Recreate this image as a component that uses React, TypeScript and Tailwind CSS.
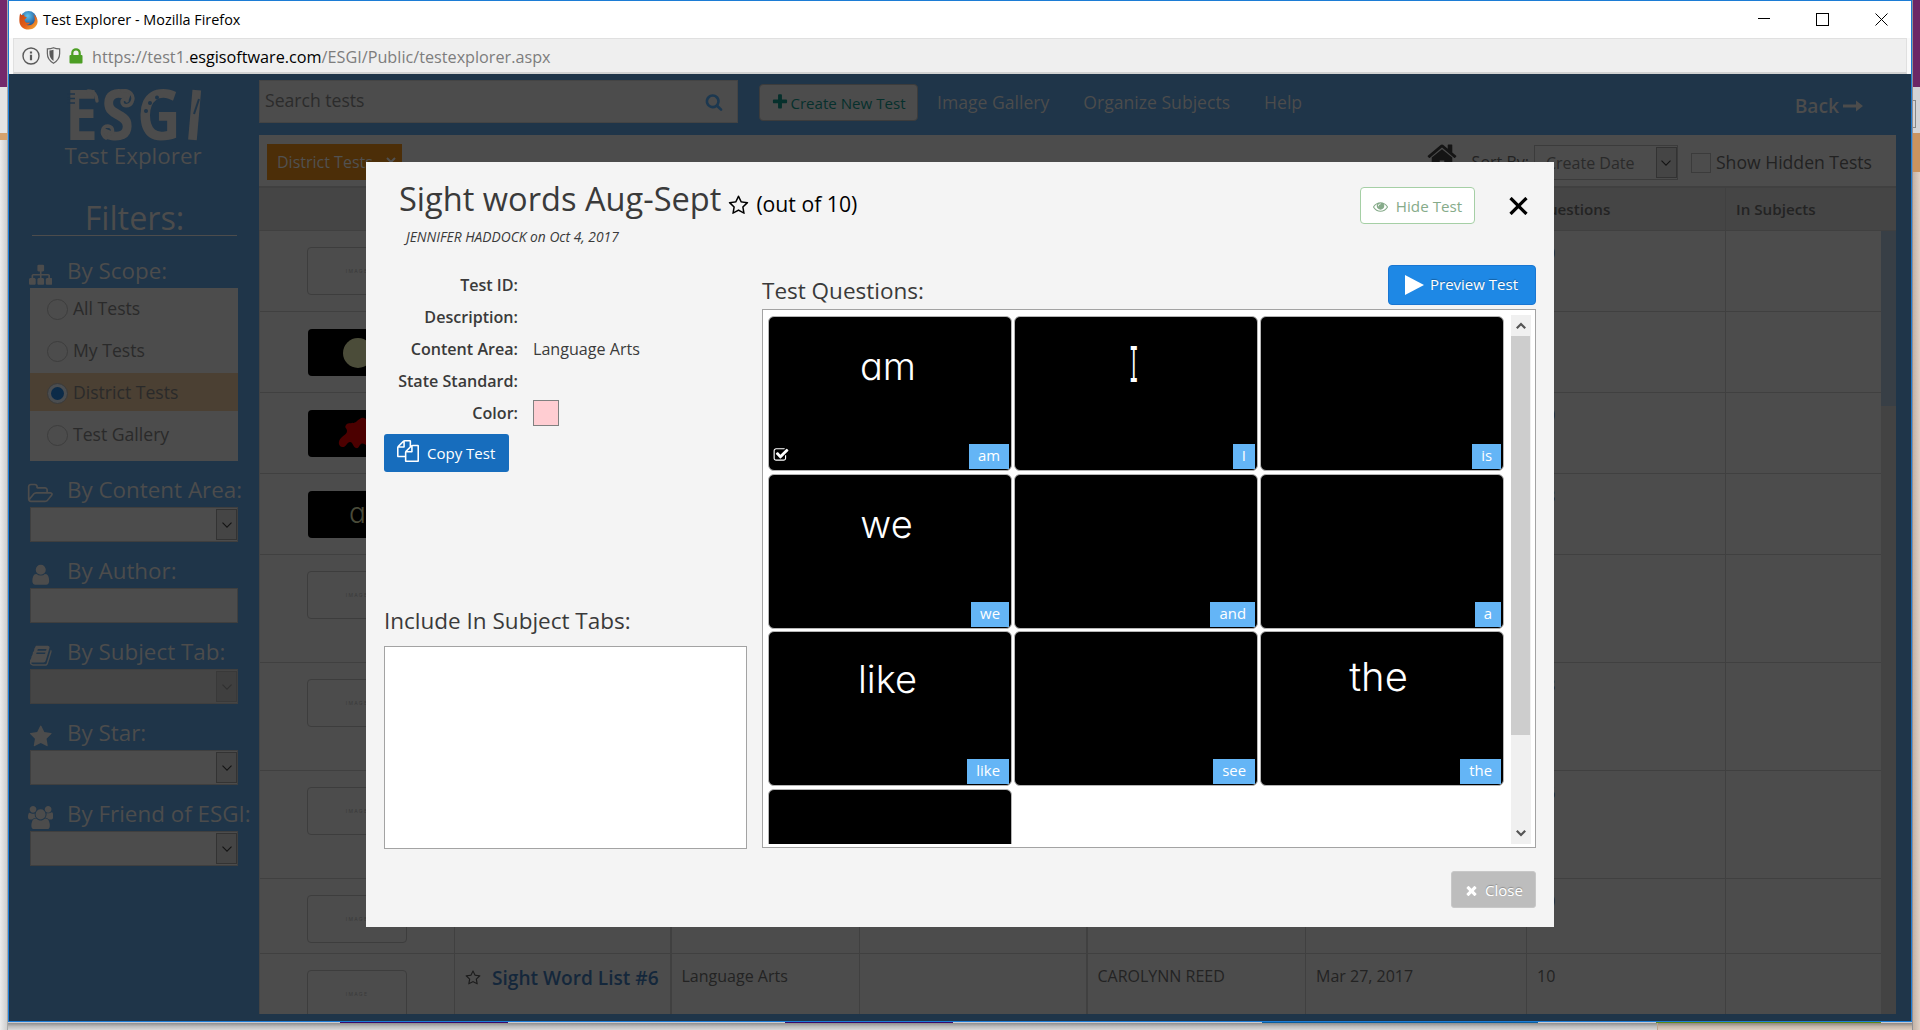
import React from "react";

/* ---------- icon glyphs on a 1792 unit grid ---------- */
const P = {
  star: "M1728 647q0 22-26 48l-363 354 86 500q1 7 1 20 0 21-10.5 35.5t-30.5 14.5q-19 0-40-12l-449-236-449 236q-22 12-40 12-21 0-31.5-14.5t-10.5-35.5q0-6 2-20l86-500-364-354q-25-27-25-48 0-37 56-46l502-73 225-455q19-41 49-41t49 41l225 455 502 73q56 9 56 46z",
  starO: "M1201 1004l306-297-422-62-189-382-189 382-422 62 306 297-73 421 378-199 377 199zm527-357q0 22-26 48l-363 354 86 500q1 7 1 20 0 50-41 50-19 0-40-12l-449-236-449 236q-22 12-40 12-21 0-31.5-14.5t-10.5-35.5q0-6 2-20l86-500-364-354q-25-27-25-48 0-37 56-46l502-73 225-455q19-41 49-41t49 41l225 455 502 73q56 9 56 46z",
  plus: "M1600 736v192q0 40-28 68t-68 28h-416v416q0 40-28 68t-68 28h-192q-40 0-68-28t-28-68v-416h-416q-40 0-68-28t-28-68v-192q0-40 28-68t68-28h416v-416q0-40 28-68t68-28h192q40 0 68 28t28 68v416h416q40 0 68 28t28 68z",
  user: "M1536 1399q0 109-62.5 187t-150.5 78h-854q-88 0-150.5-78t-62.5-187q0-85 8.5-160.5t31.5-152 58.5-131 94-89 134.5-34.5q131 128 313 128t313-128q76 0 134.5 34.5t94 89 58.5 131 31.5 152 8.5 160.5zm-256-887q0 159-112.5 271.5t-271.5 112.5-271.5-112.5-112.5-271.5 112.5-271.5 271.5-112.5 271.5 112.5 112.5 271.5z",
  sitemap: "M1792 1248v320q0 40-28 68t-68 28h-320q-40 0-68-28t-28-68v-320q0-40 28-68t68-28h96v-192h-512v192h96q40 0 68 28t28 68v320q0 40-28 68t-68 28h-320q-40 0-68-28t-28-68v-320q0-40 28-68t68-28h96v-192h-512v192h96q40 0 68 28t28 68v320q0 40-28 68t-68 28h-320q-40 0-68-28t-28-68v-320q0-40 28-68t68-28h96v-192q0-52 38-90t90-38h512v-192h-96q-40 0-68-28t-28-68v-320q0-40 28-68t68-28h320q40 0 68 28t28 68v320q0 40-28 68t-68 28h-96v192h512q52 0 90 38t38 90v192h96q40 0 68 28t28 68z",
  search: "M1216 832q0-185-131.5-316.5t-316.5-131.5-316.5 131.5-131.5 316.5 131.5 316.5 316.5 131.5 316.5-131.5 131.5-316.5zm512 832q0 52-38 90t-90 38q-54 0-90-38l-343-342q-179 124-399 124-143 0-273.5-55.5t-225-150-150-225-55.5-273.5 55.5-273.5 150-225 225-150 273.5-55.5 273.5 55.5 225 150 150 225 55.5 273.5q0 220-124 399l343 343q37 37 37 90z",
  times: "M1490 1322q0 40-28 68l-136 136q-28 28-68 28t-68-28l-294-294-294 294q-28 28-68 28t-68-28l-136-136q-28-28-28-68t28-68l294-294-294-294q-28-28-28-68t28-68l136-136q28-28 68-28t68 28l294 294 294-294q28-28 68-28t68 28l136 136q28 28 28 68t-28 68l-294 294 294 294q28 28 28 68z",
  folder: "M1845 931q0-35-53-35h-1088q-40 0-85.5 21.5t-71.5 52.5l-294 363q-18 24-18 40 0 35 53 35h1088q40 0 86-22t71-53l294-363q18-22 18-39zm-1141-163h768v-160q0-40-28-68t-68-28h-576q-40 0-68-28t-28-68v-64q0-40-28-68t-68-28h-320q-40 0-68 28t-28 68v853l256-315q44-53 116-87.5t140-34.5zm1269 163q0 62-46 120l-295 363q-43 53-116 87.5t-140 34.5h-1088q-92 0-158-66t-66-158v-960q0-92 66-158t158-66h320q92 0 158 66t66 158v32h544q92 0 158 66t66 158v160h192q54 0 99 24.5t67 70.5q15 32 15 68z",
  book: "M1703 478q40 57 18 129l-275 906q-19 64-76.5 107.5t-122.5 43.5h-923q-77 0-148.5-53.5t-99.5-131.5q-24-67-2-127 0-4 3-27t4-37q1-8-3-21.5t-3-19.5q2-11 8-21t16.5-23.5 16.5-23.5q23-38 45-91.5t30-91.5q3-10 .5-30t-.5-28q3-11 17-28t17-23q21-36 42-92t25-90q1-9-2.5-32t.5-28q4-13 22-30.5t22-22.5q19-26 42.5-84.5t27.5-96.5q1-8-3-25.5t-2-26.5q2-8 9-18t18-23 17-21q8-12 16.5-30.5t15-35 16-36 19.5-32 26.5-23.5 36-11.5 47.5 5.5l-1 3q38-9 51-9h761q74 0 114 56t18 130l-274 906q-36 119-71.5 153.5t-128.5 34.5h-869q-27 0-38 15-11 16-1 43 24 70 144 70h923q29 0 56-15.5t35-41.5l300-987q7-22 5-57 38 15 59 43zm-1064 2q-4 13 2 22.5t20 9.5h608q13 0 25.5-9.5t16.5-22.5l21-64q4-13-2-22.5t-20-9.5h-608q-13 0-25.5 9.5t-16.5 22.5zm-83 256q-4 13 2 22.5t20 9.5h608q13 0 25.5-9.5t16.5-22.5l21-64q4-13-2-22.5t-20-9.5h-608q-13 0-25.5 9.5t-16.5 22.5z",
  users: "M593 896q-162 5-265 128h-134q-82 0-138-40.5t-56-118.5q0-353 124-353 6 0 43.5 21t97.5 42.5 119 21.5q67 0 133-23-5 37-5 66 0 159 93 291zm1071 637q0 120-73 189.5t-194 69.5h-874q-121 0-194-69.5t-73-189.5q0-53 3.5-103.5t14-109 26.5-108.5 43-97.5 62-81 85.5-53.5 111.5-20q10 0 43 21.5t73 48 107 48 135 21.5 135-21.5 107-48 73-48 43-21.5q61 0 111.5 20t85.5 53.5 62 81 43 97.5 26.5 108.5 14 109 3.5 103.5zm-1024-1277q0 106-75 181t-181 75-181-75-75-181 75-181 181-75 181 75 75 181zm704 384q0 159-112.5 271.5t-271.5 112.5-271.5-112.5-112.5-271.5 112.5-271.5 271.5-112.5 271.5 112.5 112.5 271.5zm576 225q0 78-56 118.5t-138 40.5h-134q-103-123-265-128 93-132 93-291 0-29-5-66 66 23 133 23 59 0 119-21.5t97.5-42.5 43.5-21q124 0 124 353zm-128-609q0 106-75 181t-181 75-181-75-75-181 75-181 181-75 181 75 75 181z",
  eye: "M1664 960q-152-236-381-353 61 104 61 225 0 185-131.5 316.5t-316.5 131.5-316.5-131.5-131.5-316.5q0-121 61-225-229 117-381 353 133 205 333.5 326.5t434.5 121.5 434.5-121.5 333.5-326.5zm-720-384q0-20-14-34t-34-14q-125 0-214.5 89.5t-89.5 214.5q0 20 14 34t34 14 34-14 14-34q0-86 61-147t147-61q20 0 34-14t14-34zm848 384q0 34-20 69-140 230-376.5 368.5t-499.5 138.5-499.5-139-376.5-368q-20-35-20-69t20-69q140-229 376.5-368t499.5-139 499.5 139 376.5 368q20 35 20 69z",
  check: "M1472 930v318q0 119-84.5 203.5t-203.5 84.5h-832q-119 0-203.5-84.5t-84.5-203.5v-832q0-119 84.5-203.5t203.5-84.5h832q63 0 117 25 15 7 18 23 3 17-9 29l-49 49q-10 10-23 10-3 0-9-2-23-6-45-6h-832q-66 0-113 47t-47 113v832q0 66 47 113t113 47h832q66 0 113-47t47-113v-254q0-13 9-22l64-64q10-10 23-10 6 0 12 3 20 8 20 29zm231-489l-814 814q-24 24-57 24t-57-24l-430-430q-24-24-24-57t24-57l110-110q24-24 57-24t57 24l263 263 647-647q24-24 57-24t57 24l110 110q24 24 24 57t-24 57z",
  files: "M1696 384q40 0 68 28t28 68v1216q0 40-28 68t-68 28h-960q-40 0-68-28t-28-68v-288h-544q-40 0-68-28t-28-68v-672q0-40 20-88t48-76l408-408q28-28 76-48t88-20h416q40 0 68 28t28 68v328q68-40 128-40h416zm-544 213l-299 299h299v-299zm-640-384l-299 299h299v-299zm196 647l316-316v-416h-384v416q0 40-28 68t-68 28h-416v640h512v-256q0-40 20-88t48-76zm956 804v-1152h-384v416q0 40-28 68t-68 28h-416v640h896z",
  home: "M1472 992v480q0 26-19 45t-45 19h-384v-384h-256v384h-384q-26 0-45-19t-19-45v-480q0-1 .5-3t.5-3l575-474 575 474q1 2 1 6zm223-69l-62 74q-8 9-21 11h-3q-13 0-21-7l-692-577-692 577q-12 8-24 7-13-2-21-11l-62-74q-8-10-7-23.5t11-21.5l719-599q32-26 76-26t76 26l244 204v-195q0-14 9-23t23-9h192q14 0 23 9t9 23v408l219 182q10 8 11 21.5t-7 23.5z",
};

function Icon({ d, className, w = 1792 }: { d: string; className?: string; w?: number }) {
  return (
    <svg viewBox={`0 0 ${w} 1792`} fill="currentColor" className={className}>
      <path d={d} />
    </svg>
  );
}

function Chevron({ className }: { className?: string }) {
  return (
    <svg viewBox="0 0 10 6" className={className} fill="none" stroke="currentColor" strokeWidth="1.1">
      <path d="M.5.7 5 5.2 9.5.7" />
    </svg>
  );
}

/* ---------- browser chrome ---------- */
function FirefoxLogo() {
  return (
    <svg viewBox="0 0 19 20" className="h-5 w-[19px]">
      <defs>
        <radialGradient id="globe" cx=".45" cy=".3" r=".7">
          <stop offset="0" stopColor="#5ec3ee" />
          <stop offset="1" stopColor="#123f86" />
        </radialGradient>
        <linearGradient id="fox" x1="0" y1="0" x2="1" y2="1">
          <stop offset="0" stopColor="#c8450f" />
          <stop offset=".55" stopColor="#e4601a" />
          <stop offset="1" stopColor="#f6b93b" />
        </linearGradient>
      </defs>
      <circle cx="9.5" cy="9.2" r="8.2" fill="url(#globe)" />
      <path
        d="M1.200 3.200C1.500 4.600 2.500 4.900 3.300 5.300c.7-.5 1.500-.8 2.200-.8-.4.800-.4 1.500-.1 2.100.8.2 1.600.3 2.400.8-.4.900-1.400 1.300-2.100 1.900-.3 1.200.3 2.400 1.300 3.100 1.500.9 2.700.1 4 .1-.5 1.500-2 2.300-3.600 2.200 3.400 1.500 7.600-.3 8.300-4.300.3-2-.3-4.400-1.400-5.800 2.700 1.400 4.400 4.100 4.300 7-.2 4.600-4.100 8-9 8C4.300 19.600.5 16 .4 11.200c-.1-2.800.1-5.800.8-8z"
        fill="url(#fox)"
      />
    </svg>
  );
}

function TitleBar() {
  return (
    <div className="flex h-[37px] items-center bg-white pl-[10px]">
      <FirefoxLogo />
      <span className="ml-[5px] flex-1 text-[14.400px] leading-5 text-black">Test Explorer - Mozilla Firefox</span>
      <svg viewBox="0 0 13 13" className="mr-[45px] h-[13px] w-[13px]" fill="none" stroke="#000" shapeRendering="crispEdges">
        <path d="M0 5.500h12" />
      </svg>
      <svg viewBox="0 0 13 13" className="mr-[46px] h-[13px] w-[13px]" fill="none" stroke="#000" shapeRendering="crispEdges">
        <path d="M.5.5h11.500v11.500H.5z" />
      </svg>
      <svg viewBox="0 0 13 13" className="mr-[23px] h-[13px] w-[13px]" fill="none" stroke="#000">
        <path d="M.5.5l12 12M12.500.5l-12 12" />
      </svg>
    </div>
  );
}

function AddressBar() {
  return (
    <div className="flex h-9 bg-[#fafafa] pl-1 pr-[4px]">
      <div className="flex flex-1 items-center border border-b-2 border-[#e0e0e0] border-b-[#d2d2d2] bg-[#efefef] pl-[8px]">
        <svg viewBox="0 0 18 18" className="h-[18px] w-[18px]" fill="none" stroke="#5a5a5a">
          <circle cx="9" cy="9" r="8" strokeWidth="1.400" />
          <path d="M9 7.800v5.400M9 4.500v2" strokeWidth="2.200" />
        </svg>
        <svg viewBox="0 0 15 18" className="ml-[6px] h-[17px] w-[15px]">
          <path d="M1 2c2.500 0 4.500-.3 6.500-1.200C9.500 1.700 11.500 2 14 2v5c0 5-2.500 8-6.500 10.200C3.500 15 1 12 1 7z" fill="none" stroke="#666" strokeWidth="1.300" />
          <path d="M3.200 3.800c1.600 0 3-.3 4.300-.8v11.700C4.800 13 3.200 10.500 3.200 7z" fill="#5a5a5a" />
        </svg>
        <svg viewBox="0 0 14 16" className="ml-[8px] h-4 w-[14px]">
          <path d="M3.300 8V5a3.700 3.700 0 0 1 7.400 0v3" fill="none" stroke="#4c9e24" strokeWidth="2.200" />
          <rect x=".5" y="7" width="13" height="8.500" rx="1" fill="#4c9e24" />
        </svg>
        <span className="ml-[9px] pt-0.5 text-[16.220px] leading-6 text-[#7d7d7d]">
          https://test1.<span className="text-black">esgisoftware.com</span>/ESGI/Public/testexplorer.aspx
        </span>
      </div>
    </div>
  );
}

/* ---------- dimmed page behind the dialog ---------- */
function EsgiLogo() {
  return (
    <svg viewBox="0 0 138 54" className="ml-[57px] h-[54px] w-[138px]" fill="#4c4c4c" fontFamily="Open Sans, sans-serif" fontWeight="700" fontSize="70">
      <text x="-1" y="52" textLength="33" lengthAdjust="spacingAndGlyphs">E</text>
      <text x="35" y="52" textLength="33" lengthAdjust="spacingAndGlyphs">S</text>
      <text x="71" y="52" textLength="44" lengthAdjust="spacingAndGlyphs">G</text>
      <text x="119" y="52" textLength="19" lengthAdjust="spacingAndGlyphs" transform="rotate(5 128 28)">I</text>
      <g stroke="#1f3549" strokeWidth="1.600">
        <path d="M1 6h8M1 10.500h8M1 15h8" />
        <path d="M133 11l-5 15" strokeWidth="2" />
      </g>
      <g fill="#1f3549">
        <circle cx="80" cy="23" r="2" />
        <circle cx="84" cy="15" r="2" />
        <circle cx="91" cy="9.500" r="2" />
      </g>
      {/* curls that end the strokes */}
      <g fill="none" stroke="#4c4c4c" strokeWidth="3.400" strokeLinecap="round">
        <path d="M56 3c8-2 13 5 10 11-2 5-10 5-10 0 0-3 4-4 5-1" />
        <path d="M40 50c-6-4-4-12 2-12 6 1 6 8 1 8" />
        <path d="M22 3c6 0 9 4 9 10" />
      </g>
    </svg>
  );
}

function SelectBox({ disabled = false }: { disabled?: boolean }) {
  return (
    <div className={`ml-[21px] flex h-[35px] w-[208px] justify-end border py-px ${disabled ? "border-[#3f3f3f] bg-[#454545]" : "border-[#3f3f3f] bg-[#4c4c4c]"}`}>
      <div className={`flex w-[21px] items-center justify-center border ${disabled ? "border-[#393939] bg-[#3f3f3f] text-[#303030]" : "border-[#333] bg-[#454545] text-[#141414]"}`}>
        <Chevron className="h-[6px] w-[10px]" />
      </div>
    </div>
  );
}

function FilterHeading({ d, w, children }: { d: string; w?: number; children: React.ReactNode }) {
  return (
    <div className="flex h-8 items-center">
      <div className="flex w-[58px] shrink-0 justify-center pl-[5px] pt-[5px]">
        <Icon d={d} w={w} className="h-[23.500px] w-auto" />
      </div>
      <span className="whitespace-nowrap pb-0.5 text-[22.400px] leading-[30px]">{children}</span>
    </div>
  );
}

const SCOPES = ["All Tests", "My Tests", "District Tests", "Test Gallery"];

function Sidebar() {
  return (
    <aside className="w-[250px] shrink-0 pt-[14px] text-[#4c4c4c]">
      <EsgiLogo />
      <div className="pr-0.5 text-center text-[22.400px] leading-[27px]">Test Explorer</div>
      <div className="ml-[23px] mt-[32px] h-[35px] w-[205px] border-b border-[#4c4c4c] text-center text-[32.300px] leading-8">
        Filters:
      </div>
      <div className="mt-5">
        <FilterHeading d={P.sitemap}>By Scope:</FilterHeading>
      </div>
      <div className="ml-[21px] flex h-[173px] w-[208px] flex-col bg-[#4c4c4c] text-[#2a2a2a]">
        {SCOPES.map((s, i) => (
          <div
            key={s}
            className={
              i === 2
                ? "mb-[3px] mt-px flex h-[38px] items-center bg-[#4b4033] pl-[17px]"
                : "flex h-[42px] items-center pl-[17px]"
            }
          >
            <div className={i === 2 ? "mr-[5px] mt-[3px] flex h-[21px] w-[21px] items-center justify-center rounded-full border border-[#3a3a3a] bg-[#4a4d50]" : "mr-[5px] mt-px h-[21px] w-[21px] rounded-full border border-[#3d3d3d]"}>
              {i === 2 && <div className="h-[13px] w-[13px] rounded-full bg-[#0c2b48]" />}
            </div>
            <span className={i === 2 ? "text-[17.600px] leading-6" : "pb-0.5 text-[17.600px] leading-6"}>{s}</span>
          </div>
        ))}
      </div>
      <div className="mt-[14px]">
        <FilterHeading d={P.folder} w={2048}>By Content Area:</FilterHeading>
        <SelectBox />
      </div>
      <div className="mt-[14px]">
        <FilterHeading d={P.user}>By Author:</FilterHeading>
        <div className="ml-[21px] h-[35px] w-[208px] border border-[#3f3f3f] bg-[#4c4c4c]" />
      </div>
      <div className="mt-[14px]">
        <FilterHeading d={P.book}>By Subject Tab:</FilterHeading>
        <SelectBox disabled />
      </div>
      <div className="mt-[14px]">
        <FilterHeading d={P.star}>By Star:</FilterHeading>
        <SelectBox />
      </div>
      <div className="mt-[14px]">
        <FilterHeading d={P.users} w={1920}>By Friend of ESGI:</FilterHeading>
        <SelectBox />
      </div>
    </aside>
  );
}

function TopNav() {
  return (
    <div className="flex h-[61px] items-start pt-[6px] text-[17.600px] text-[#4c4c4c]">
      <div className="flex h-[43px] w-[479px] items-center justify-between border border-[#444] bg-[#4c4c4c] pl-[5px] pr-[14px] text-[#2b2b2b]">
        <span className="-mt-[3px] leading-6">Search tests</span>
        <Icon d={P.search} className="h-[18px] w-[18px] text-[#1c3850]" />
      </div>
      <button className="ml-[21px] mt-1 flex h-[37px] w-[159px] items-center justify-center rounded-[4px] border border-[#3c3c3c] bg-[#4c4c4c] pt-0.5 text-[15.100px] text-[#06302c]">
        <Icon d={P.plus} className="-mt-[3px] mr-[1px] h-[18px] w-[18px]" />
        Create New Test
      </button>
      <span className="ml-[19px] mt-[10px] leading-6">Image Gallery</span>
      <span className="ml-[34px] mt-[10px] leading-6">Organize Subjects</span>
      <span className="ml-[34px] mt-[10px] leading-6">Help</span>
      <span className="ml-auto mr-[33px] mt-[14px] flex items-center text-[19.200px] font-semibold leading-6">
        Back
        <svg viewBox="0 0 20 12" className="ml-1 h-3 w-5" fill="currentColor">
          <path d="M0 4.500h13V.5L20 6l-7 5.500v-4H0z" />
        </svg>
      </span>
    </div>
  );
}

function Toolbar() {
  return (
    <div className="flex h-[51px] items-start bg-[#4c4c4c] text-[#222]">
      <div className="ml-2 mt-[9px] flex h-9 w-[135px] items-center bg-[#4c2e08] pl-[10px] text-base text-[#515151]">
        District Tests
        <svg viewBox="0 0 10 10" className="ml-[13px] h-[10px] w-[10px]" stroke="currentColor" strokeWidth="2">
          <path d="M1 1l8 8M9 1l-8 8" />
        </svg>
      </div>
      <Icon d={P.home} className="ml-auto mr-[14px] mt-[5px] h-8 w-8 text-[#151515]" />
      <span className="mt-[15px] text-base leading-6">Sort By:</span>
      <div className="ml-[5px] mt-[10px] flex h-[35px] w-[144px] items-center justify-between border border-[#3b3b3b] py-px pl-[11px] text-base text-[#2a2a2a]">
        Create Date
        <div className="flex h-full w-[21px] items-center justify-center border border-[#333] bg-[#454545] text-[#141414]">
          <Chevron className="h-[6px] w-[10px]" />
        </div>
      </div>
      <div className="ml-[13px] mt-[18px] h-5 w-5 border border-[#3b3b3b]" />
      <span className="ml-[5px] mr-[24px] mt-[15px] text-[17.600px] leading-6">Show Hidden Tests</span>
    </div>
  );
}

type Thumb = "image" | "moon" | "splat" | "letter";
const ROWS: { thumb: Thumb; h: string; count: string }[] = [
  { thumb: "image", h: "h-[81px]", count: "10" },
  { thumb: "moon", h: "h-[81px]", count: "" },
  { thumb: "splat", h: "h-[81px]", count: "10" },
  { thumb: "letter", h: "h-[81px]", count: "18" },
  { thumb: "image", h: "h-[108px]", count: "" },
  { thumb: "image", h: "h-[108px]", count: "18" },
  { thumb: "image", h: "h-[108px]", count: "16" },
  { thumb: "image", h: "h-[75px]", count: "10" },
];

function Thumbnail({ kind }: { kind: Thumb }) {
  if (kind === "image") {
    return (
      <div className="ml-[47px] mt-4 flex h-12 w-[100px] items-center justify-center rounded-[4px] border border-[#3d3d3d]">
        <span className="font-[Inter] text-[5px] leading-none tracking-[1.300px] text-[#3a3a3a]">IMAGE</span>
      </div>
    );
  }
  return (
    <div className="ml-[48px] mt-[17px] flex h-[47px] w-[99px] items-center justify-center overflow-hidden rounded-[4px] bg-black">
      {kind === "moon" && <div className="h-[30px] w-[30px] rounded-full bg-[#4b4c39]" />}
      {kind === "splat" && (
        <svg viewBox="0 0 40 40" className="h-10 w-10" fill="#4c0000">
          <path d="M8 11c2-3 7-1 10-3 3-3 6-5 8-4 4 1 2 6 5 8 3 1 7 0 7 4s-5 4-5 7 5 4 4 8-6 3-8 1-4-3-6-2-2 5-5 4-3-6-6-6-4 6-8 5-4-6-1-9 6-4 6-7-3-3-1-6z" />
        </svg>
      )}
      {kind === "letter" && (
        <span className="pb-[3px] font-[Inter] text-[28px] font-light leading-none text-[#4a4b39] [font-feature-settings:'cv11']">a</span>
      )}
    </div>
  );
}

function Cells({ name, area, author, date, count, thumb }: { name?: React.ReactNode; area?: string; author?: string; date?: string; count?: string; thumb: Thumb }) {
  return (
    <>
      <div className="w-[195px] border-r border-[#404040]"><Thumbnail kind={thumb} /></div>
      <div className="w-[217px] border-r-2 border-[#404040] pl-[10px]">{name}</div>
      <div className="w-[188px] border-r border-[#404040] pl-[9.500px] pt-2">{area}</div>
      <div className="w-[228px] border-r-2 border-[#404040]" />
      <div className="w-[218px] border-r border-[#404040] pl-[9.500px] pt-2">{author}</div>
      <div className="w-[221px] border-r border-[#404040] pl-[10px] pt-2">{date}</div>
      <div className="w-[199px] border-r border-[#404040] pl-[10px] pt-2">{count}</div>
      <div className="w-[155px]" />
    </>
  );
}

function TestTable() {
  return (
    <div className="flex min-h-0 flex-1 flex-col bg-[#4c4c4c] text-base leading-7 text-[#232323]">
      <div className="flex h-[45px] items-center border-b border-t-2 border-[#404040] bg-[#454545] text-[15.200px] font-semibold leading-6">
        <div className="w-[1268px]" />
        <div className="flex h-full w-[199px] items-center border-r border-[#404040] pb-px pl-[9px]">Questions</div>
        <span className="pb-px pl-[10px]">In Subjects</span>
      </div>
      <div className="flex min-h-0 flex-1">
        <div className="w-[1622px] overflow-hidden border-l border-[#444]">
          {ROWS.map((r, i) => (
            <div key={i} className={`flex border-b border-[#404040] ${r.h}`}>
              <Cells thumb={r.thumb} count={r.count} />
            </div>
          ))}
          <div className="flex h-[75px]">
            <Cells
              thumb="image"
              name={
                <div className="flex items-center pt-[10px] text-[19.100px] font-semibold">
                  <Icon d={P.starO} className="mr-[11px] h-4 w-4 text-[#1c1c1c]" />
                  <span className="whitespace-nowrap text-[#14273b]">Sight Word List #6</span>
                </div>
              }
              area="Language Arts"
              author="CAROLYNN REED"
              date="Mar 27, 2017"
              count="10"
            />
          </div>
        </div>
        <div className="w-[15px] bg-[#434343]">
          <div className="h-[175px] bg-[#383f46]" />
        </div>
      </div>
    </div>
  );
}

/* ---------- dialog ---------- */
const QUESTIONS: { tag: string; word?: string; wordClass?: string; check?: boolean }[] = [
  { tag: "am", word: "am", wordClass: "pt-[26px] text-[38px]", check: true },
  { tag: "I", word: "I", wordClass: "pt-[24px] text-[49px]" },
  { tag: "is" },
  { tag: "we", word: "we", wordClass: "pt-[26px] pr-[7px] text-[38px]" },
  { tag: "and" },
  { tag: "a" },
  { tag: "like", word: "like", wordClass: "pt-[24px] pr-[5px] text-[38px]" },
  { tag: "see" },
  { tag: "the", word: "the", wordClass: "pt-[22px] pr-[7px] text-[40px]" },
  { tag: "my" },
];

function QuestionCard({ q }: { q: (typeof QUESTIONS)[number] }) {
  return (
    <div className="relative h-[155px] w-[244px] overflow-hidden rounded-[6px] border border-[#b5b5b5] bg-black">
      {q.word && (
        <div className={`pr-1 text-center leading-[44px] text-white ${q.wordClass}`}>
          {q.word === "I" ? (
            <span className="inline-block scale-x-[0.35] font-[Inter] font-normal [font-feature-settings:'cv08']">{q.word}</span>
          ) : (
            <span className="font-[Inter] font-light [font-feature-settings:'cv11']">{q.word}</span>
          )}
        </div>
      )}
      {q.check && <Icon d={P.check} className="absolute bottom-[7px] left-[4px] h-4 w-4 text-white" />}
      <div className="absolute bottom-px right-[2px] bg-[#64b5f6] px-[9px] pb-0.5 text-[14.900px] leading-[23px] text-white">{q.tag}</div>
    </div>
  );
}

function QuestionsPanel() {
  return (
    <div className="flex h-[539px] w-[774px] justify-between border border-[#a3a3a3] bg-white p-[5px] pr-1">
      <div className="mt-px grid h-[528px] grid-cols-[244px_244px_244px] content-start gap-x-[2px] gap-y-[2.500px] overflow-hidden">
        {QUESTIONS.map((q) => (
          <QuestionCard key={q.tag} q={q} />
        ))}
      </div>
      <div className="flex h-[529px] w-5 flex-col bg-[#f0f0f0] pr-px text-[#555]">
        <div className="flex h-[21px] items-center justify-center">
          <svg viewBox="0 0 10 8" className="h-2 w-[10px]" fill="none" stroke="currentColor" strokeWidth="2.200"><path d="M.8 6.300 5 2l4.200 4.300" /></svg>
        </div>
        <div className="h-[399px] bg-[#cdcdcd]" />
        <div className="mt-auto flex h-[23px] items-center justify-center">
          <svg viewBox="0 0 10 8" className="h-2 w-[10px]" fill="none" stroke="currentColor" strokeWidth="2.200"><path d="M.8 1.700 5 6l4.200-4.300" /></svg>
        </div>
      </div>
    </div>
  );
}

const DETAILS: [string, React.ReactNode][] = [
  ["Test ID:", null],
  ["Description:", null],
  ["Content Area:", "Language Arts"],
  ["State Standard:", null],
  ["Color:", <div key="c" className="h-[26px] w-[26px] border border-[#808080] bg-[#ffcdd2]" />],
];

function TestDialog() {
  return (
    <div className="absolute left-[366px] top-[162px] h-[765px] w-[1188px] bg-[#f4f4f4] text-[#3a3a3a]">
      <header className="flex h-[103px] justify-between pl-[33px] pr-[26px]">
        <div>
          <div className="flex h-[57px] items-end">
            <h1 className="text-[32.600px] leading-[40px]">Sight words Aug-Sept</h1>
            <Icon d={P.starO} className="mb-[3px] ml-[7px] h-[21px] w-[21px] text-black" />
            <span className="mb-px ml-[7px] text-[21.200px] leading-[28px] text-black">(out of 10)</span>
          </div>
          <div className="ml-[7px] mt-[9px] text-[13.800px] italic leading-[18px]">JENNIFER HADDOCK on Oct 4, 2017</div>
        </div>
        <div className="flex pt-[25px]">
          <button className="flex h-[37px] w-[115px] items-center justify-center rounded-[4px] border border-[#a5cfa5] bg-white pt-0.5 text-[15.200px] text-[#86ab8a]">
            <Icon d={P.eye} className="mr-[8px] h-[15px] w-[15px]" />
            Hide Test
          </button>
          <svg viewBox="0 0 19 18" className="ml-[34px] mt-[10px] h-[18px] w-[19px]" fill="none" stroke="#000" strokeWidth="3.200">
            <path d="M1.500 1l16 16M17.500 1l-16 16" />
          </svg>
        </div>
      </header>

      <div className="flex pl-[18px]">
        <section className="mr-[15px] w-[363px]">
          <div className="grid grid-cols-[134px_1fr] gap-x-[15px] pt-1 text-[16.100px] leading-8">
            {DETAILS.map(([label, value]) => (
              <React.Fragment key={label}>
                <div className="whitespace-nowrap text-right font-semibold">{label}</div>
                <div className="flex h-8 items-center">{value}</div>
              </React.Fragment>
            ))}
          </div>
          <button className="mt-[5px] flex h-[38px] w-[125px] items-center rounded-[3px] bg-[#176dbd] pl-[13px] text-[15px] text-white">
            <Icon d={P.files} className="-mt-1 mr-[8px] h-[22px] w-[22px]" />
            Copy Test
          </button>
          <h2 className="mt-[134px] text-[22.500px] leading-[30px]">Include In Subject Tabs:</h2>
          <div className="mt-[10px] h-[203px] border border-[#a3a3a3] bg-white" />
        </section>

        <section className="w-[774px]">
          <div className="flex h-[44px] justify-between">
            <h2 className="mt-[11px] text-[22.500px] leading-[30px]">Test Questions:</h2>
            <button className="flex h-[40px] w-[148px] items-center rounded-[4px] border border-[#1976d2] bg-[#1e88e5] pl-4 text-[15px] text-white [text-shadow:0_-1px_1px_rgba(0,0,0,0.3)]">
              <svg viewBox="0 0 19 20" className="mr-[6px] h-5 w-[19px]" fill="#fff"><path d="M0 0l19 10L0 20z" /></svg>
              <span className="pb-0.5">Preview Test</span>
            </button>
          </div>
          <QuestionsPanel />
          <div className="mt-[23px] flex justify-end">
            <button className="flex h-[37px] w-[85px] items-center justify-center rounded-[3px] border border-[#c8c8c8] bg-[#bdbdbd] pt-0.5 text-[15px] text-white [text-shadow:0_-1px_1px_rgba(0,0,0,0.25)]">
              <Icon d={P.times} className="mr-[6px] h-[15px] w-[15px]" />
              Close
            </button>
          </div>
        </section>
      </div>
    </div>
  );
}

export default function App() {
  return (
    <div className="relative flex h-[1030px] w-[1920px] overflow-hidden bg-[#e4e4e4] font-['Open_Sans',sans-serif]">
      {/* slivers of the desktop on both sides of the window */}
      <div className="flex w-[8px] flex-col border-r border-[#a8a8a8]">
        <div className="h-[87px] bg-[#742a6c]" />
        <div className="h-[46px] bg-[#e4e4e4]" />
        <div className="h-[7px] bg-[#d6a26c]" />
        <div className="flex-1 bg-gradient-to-r from-[#ececec] to-[#cfcfcf]" />
      </div>
      <div className="flex h-[1030px] flex-1 flex-col">
        <div className="flex h-[1022px] flex-col border border-[#1c7cd5] bg-[#1f3549]">
          <TitleBar />
          <AddressBar />
          <div className="flex min-h-0 flex-1">
            <Sidebar />
            <main className="mr-[15px] flex min-w-0 flex-1 flex-col pb-[7px]">
              <TopNav />
              <Toolbar />
              <TestTable />
            </main>
          </div>
        </div>
        <div className="flex h-px shrink-0 bg-[#c8cbd2]">
          <div className="ml-[332px] w-[168px] bg-[#3a0a6a]" />
          <div className="ml-[277px] w-[168px] bg-[#3a0a6a]" />
          <div className="ml-[309px] w-[276px] bg-[#0b5f9e]" />
          <div className="ml-[118px] w-[225px] bg-[#5c8a14]" />
        </div>
        <div className="flex flex-1">
          <div className="w-[1650px] border-r border-[#bda58e] bg-gradient-to-b from-[#8d8d8d] via-[#bcbcbc] to-[#d8d8d8]" />
          <div className="flex-1 bg-gradient-to-b from-[#8d8681] via-[#c5b6a9] to-[#decec0]" />
        </div>
      </div>
      <div className="flex w-[8px] flex-col border-l border-[#8f8f95]">
        <div className="h-[87px] bg-[#6c2766]" />
        <div className="flex h-[46px] items-start bg-[#d3d3d6]">
          <div className="mt-[13px] h-7 w-[3px] border-y border-r border-[#888]" />
        </div>
        <div className="h-[39px] bg-[#c9935f]" />
        <div className="flex-1 bg-gradient-to-r from-[#c2b2a6] to-[#e0d0c4]" />
      </div>
      <TestDialog />
    </div>
  );
}
